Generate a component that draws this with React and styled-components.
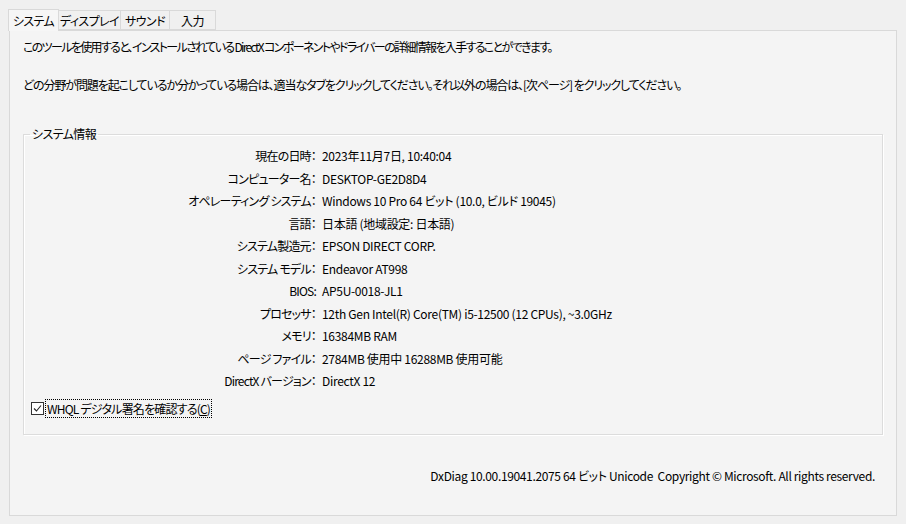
import React from 'react';
import styled, { createGlobalStyle } from 'styled-components';

const GlobalStyle = createGlobalStyle`
  html, body {
    margin: 0;
    padding: 0;
    background: #f0f0f0;
  }
  body {
    font-family: "Noto Sans CJK JP", "Noto Sans", sans-serif;
    font-size: 12px;
    color: #000;
    font-feature-settings: "palt";
  }
`;

const Window = styled.div`
  width: 906px;
  height: 524px;
  box-sizing: border-box;
  padding: 9px 9px 8px 9px;
  display: flex;
  flex-direction: column;
`;
Window.displayName = 'Window';

const TabRow = styled.div`
  display: flex;
  align-items: flex-end;
  height: 21px;
  position: relative;
  z-index: 1;
`;
TabRow.displayName = 'TabRow';

const Tab = styled.div`
  box-sizing: border-box;
  width: ${(p) => p.w}px;
  height: ${(p) => (p.selected ? '22px' : '20px')};
  margin-bottom: ${(p) => (p.selected ? '-1px' : '0')};
  margin-left: ${(p) => (p.selected ? '-1px' : '0')};
  border: 1px solid #d9d9d9;
  border-bottom: ${(p) => (p.selected ? 'none' : '1px solid #d9d9d9')};
  border-left: ${(p) => (p.selected ? '1px solid #d9d9d9' : 'none')};
  background: ${(p) => (p.selected ? '#f6f6f6' : '#f0f0f0')};
  display: flex;
  align-items: center;
  justify-content: center;
  padding-top: ${(p) => (p.selected ? '0' : '1px')};
  line-height: 1;
  letter-spacing: -0.6px;
  white-space: nowrap;
`;
Tab.displayName = 'Tab';

const Panel = styled.div`
  flex: 1;
  border: 1px solid #d9d9d9;
  background: #f4f4f4;
  box-sizing: border-box;
  padding: 7px 13px 0 13px;
  display: flex;
  flex-direction: column;
`;
Panel.displayName = 'Panel';

const Intro = styled.p`
  margin: 0 0 20px 0;
  line-height: 18px;
  letter-spacing: ${(p) => p.spacing}px;
  white-space: nowrap;
`;
Intro.displayName = 'Intro';

const GroupBox = styled.fieldset`
  margin: 12px 0 0 0;
  padding: 0 0 10px 0;
  height: 309px;
  box-sizing: border-box;
  border: 1px solid #dcdcdc;
  box-shadow: 1px 1px 0 #fff, inset 1px 1px 0 #fff;
  min-width: 0;
`;
GroupBox.displayName = 'GroupBox';

const Legend = styled.legend`
  margin-left: 6px;
  padding: 0 2px;
  line-height: 16px;
  letter-spacing: -0.6px;
`;
Legend.displayName = 'Legend';

const InfoGrid = styled.div`
  display: grid;
  grid-template-columns: 292px 1fr;
  column-gap: 6px;
  margin-top: 3px;
`;
InfoGrid.displayName = 'InfoGrid';

const Label = styled.div`
  text-align: right;
  height: 22.5px;
  line-height: 22.5px;
  letter-spacing: -0.8px;
  white-space: nowrap;
`;
Label.displayName = 'Label';

const Value = styled.div`
  height: 22.5px;
  line-height: 22.5px;
  letter-spacing: -0.3px;
  white-space: nowrap;
`;
Value.displayName = 'Value';

const CheckRow = styled.label`
  display: flex;
  align-items: center;
  margin: 7px 0 0 7px;
  gap: 2px;
`;
CheckRow.displayName = 'CheckRow';

const CheckBox = styled.span`
  width: 11px;
  height: 11px;
  border: 1px solid #333;
  background: #fff;
  display: flex;
  align-items: center;
  justify-content: center;
`;
CheckBox.displayName = 'CheckBox';

const CheckLabel = styled.span`
  outline: 1px dotted #000;
  padding: 0 1px;
  line-height: 17px;
  letter-spacing: -0.8px;
  white-space: nowrap;
`;
CheckLabel.displayName = 'CheckLabel';

const Footer = styled.div`
  margin-top: 32px;
  text-align: right;
  padding-right: 8px;
  letter-spacing: -0.35px;
  white-space: nowrap;
`;
Footer.displayName = 'Footer';

const tabs = [
  ['システム', 51],
  ['ディスプレイ', 62],
  ['サウンド', 49],
  ['入力', 46],
];

const info = [
  ['現在の日時：', '2023年11月7日, 10:40:04'],
  ['コンピューター名：', 'DESKTOP-GE2D8D4'],
  ['オペレーティング システム：', 'Windows 10 Pro 64 ビット (10.0, ビルド 19045)'],
  ['言語：', '日本語 (地域設定: 日本語)'],
  ['システム製造元：', 'EPSON DIRECT CORP.'],
  ['システム モデル：', 'Endeavor AT998'],
  ['BIOS:', 'AP5U-0018-JL1'],
  ['プロセッサ：', '12th Gen Intel(R) Core(TM) i5-12500 (12 CPUs), ~3.0GHz'],
  ['メモリ：', '16384MB RAM'],
  ['ページ ファイル：', '2784MB 使用中 16288MB 使用可能'],
  ['DirectX バージョン：', 'DirectX 12'],
];

const App = () => (
  <>
    <GlobalStyle />
    <Window>
      <TabRow>
        {tabs.map(([t, w], i) => (
          <Tab key={t} w={w} selected={i === 0}>{t}</Tab>
        ))}
      </TabRow>
      <Panel>
        <Intro spacing={-1.65}>このツールを使用すると、インストールされている DirectX コンポーネントやドライバーの詳細情報を入手することができます。</Intro>
        <Intro spacing={-1.1}>どの分野が問題を起こしているか分かっている場合は、適当なタブをクリックしてください。それ以外の場合は、[次ページ] をクリックしてください。</Intro>
        <GroupBox>
          <Legend>システム情報</Legend>
          <InfoGrid>
            {info.map(([k, v]) => (
              <React.Fragment key={k}>
                <Label>{k}</Label>
                <Value>{v}</Value>
              </React.Fragment>
            ))}
          </InfoGrid>
          <CheckRow>
            <CheckBox>
              <svg width="9" height="9" viewBox="0 0 9 9">
                <path d="M1 4.5 L3.5 7 L8 1.5" fill="none" stroke="#222" strokeWidth="1.1" />
              </svg>
            </CheckBox>
            <CheckLabel>WHQL デジタル署名を確認する(<u>C</u>)</CheckLabel>
          </CheckRow>
        </GroupBox>
        <Footer>DxDiag 10.00.19041.2075 64 ビット Unicode&nbsp; Copyright © Microsoft. All rights reserved.</Footer>
      </Panel>
    </Window>
  </>
);

export default App;
